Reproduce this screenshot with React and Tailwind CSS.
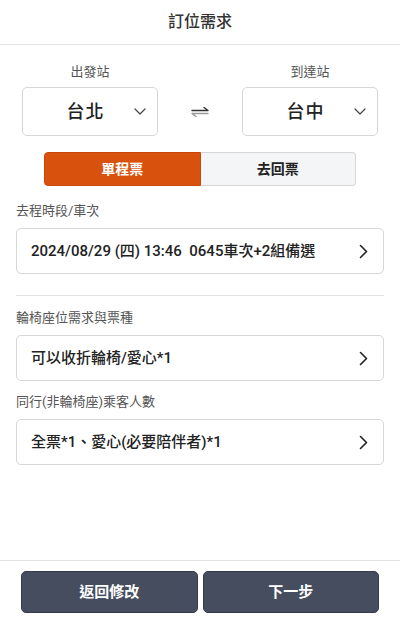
import React, { useState } from 'react';

const font = { fontFamily: 'Roboto, "Noto Sans CJK TC", "Noto Sans", sans-serif' };

function ChevronDown() {
  return (
    <svg width="12" height="7" viewBox="0 0 12 7" fill="none">
      <path d="M1 1l5 5 5-5" stroke="#444" strokeWidth="1.2" strokeLinecap="round" strokeLinejoin="round" />
    </svg>
  );
}

function ChevronRight() {
  return (
    <svg width="9" height="15" viewBox="0 0 9 15" fill="none">
      <path d="M1.5 1.5l6 6-6 6" stroke="#222" strokeWidth="1.6" strokeLinecap="round" strokeLinejoin="round" />
    </svg>
  );
}

function SwapIcon() {
  return (
    <svg width="18" height="10" viewBox="0 0 18 10" fill="none">
      <path d="M1 3.5h16l-4-3" stroke="#333" strokeWidth="1.4" strokeLinecap="round" strokeLinejoin="round" />
      <path d="M17 6.5H1l4 3" stroke="#9a9a9a" strokeWidth="1.4" strokeLinecap="round" strokeLinejoin="round" />
    </svg>
  );
}

function StationSelect({ label, value }) {
  return (
    <div className="flex w-[136px] flex-col items-center">
      <div className="mb-[6px] text-[13px] leading-[18px] text-[#555]">{label}</div>
      <div className="relative flex h-[49px] w-full items-center justify-center rounded-[5px] border border-[#d6d6d6] bg-white pr-[9px]">
        <span className="text-[18px] font-medium tracking-[1px] text-[#222]">{value}</span>
        <span className="absolute right-[11px] top-[20px] flex">
          <ChevronDown />
        </span>
      </div>
    </div>
  );
}

function Field({ label, value, className }) {
  return (
    <div className={className}>
      <div className="mb-[8px] text-[13px] leading-[18px] text-[#555]">{label}</div>
      <div className="flex h-[46px] items-center justify-between rounded-[5px] border border-[#d6d6d6] bg-white pl-[14px] pr-[15px]">
        <span className="whitespace-pre text-[15px] font-medium text-[#222]">{value}</span>
        <ChevronRight />
      </div>
    </div>
  );
}

export default function App() {
  const [trip, setTrip] = useState('single');

  return (
    <div className="flex h-[628px] w-full flex-col bg-white" style={font}>
      <div className="flex h-[45px] items-center justify-center border-b border-[#e2e2e2]">
        <span className="text-[16px] font-medium text-[#333]">訂位需求</span>
      </div>

      <div className="flex items-end px-[22px] pt-[18px]">
        <StationSelect label="出發站" value="台北" />
        <div className="flex h-[49px] flex-1 items-center justify-center">
          <SwapIcon />
        </div>
        <StationSelect label="到達站" value="台中" />
      </div>

      <div className="mx-[44px] mt-[16px] flex h-[34px]">
        <button
          onClick={() => setTrip('single')}
          className={
            trip === 'single'
              ? 'flex-1 rounded-l-[4px] border border-[#c9470a] bg-[#d8520e] text-[14px] font-bold text-white'
              : 'flex-1 rounded-l-[4px] border border-[#d6d6d6] bg-[#f4f5f7] text-[14px] font-bold text-[#222]'
          }
        >
          單程票
        </button>
        <button
          onClick={() => setTrip('round')}
          className={
            trip === 'round'
              ? 'flex-1 rounded-r-[4px] border border-[#c9470a] bg-[#d8520e] text-[14px] font-bold text-white'
              : 'flex-1 rounded-r-[4px] border border-l-0 border-[#d6d6d6] bg-[#f4f5f7] text-[14px] font-bold text-[#222]'
          }
        >
          去回票
        </button>
      </div>

      <div className="px-[16px]">
        <Field className="mt-[16px]" label="去程時段/車次" value="2024/08/29 (四) 13:46  0645車次+2組備選" />
        <div className="mt-[21px] h-px bg-[#e2e2e2]" />
        <Field className="mt-[13px]" label="輪椅座位需求與票種" value="可以收折輪椅/愛心*1" />
        <Field className="mt-[12px]" label="同行(非輪椅座)乘客人數" value="全票*1、愛心(必要陪伴者)*1" />
      </div>

      <div className="flex-1" />

      <div className="border-t border-[#e2e2e2] px-[21px] pb-[15px] pt-[10px]">
        <div className="flex gap-[5px]">
          <button className="h-[42px] flex-1 rounded-[5px] border border-[#353c4a] bg-[#454d5e] text-[15px] font-bold text-white">
            返回修改
          </button>
          <button className="h-[42px] flex-1 rounded-[5px] border border-[#353c4a] bg-[#454d5e] text-[15px] font-bold text-white">
            下一步
          </button>
        </div>
      </div>
    </div>
  );
}
